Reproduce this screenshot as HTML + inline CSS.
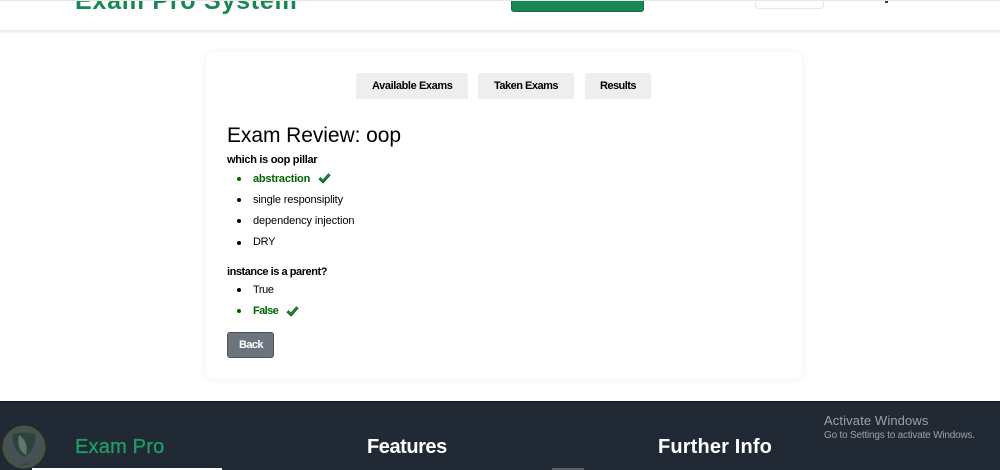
<!DOCTYPE html>
<html><head><meta charset="utf-8"><style>
html,body{margin:0;padding:0;width:1000px;height:470px;overflow:hidden;background:#fff;font-family:"Liberation Sans",sans-serif;color:#000}
div,span{position:absolute;white-space:nowrap;box-sizing:border-box}
.t{line-height:1}
.tab{background:#eee;top:73px;height:26px;border-radius:3px 3px 0 0}
.b{font-weight:700;font-size:11px}
.r{font-size:11px}
.dot{width:4px;height:4px;border-radius:50%;background:#000;left:236.5px;margin-top:.5px}
.g{color:#006400}
.dg{background:#006400}
</style></head><body>
<div style="left:-10px;top:-10px;width:1020px;height:40px;background:#fff;border-radius:10px;box-shadow:0 1px 4px rgba(0,0,0,.14)"></div>
<div style="left:0;top:0;width:1000px;height:1px;background:#e6e6e6"></div>
<div style="left:0;top:1px;width:1000px;height:29px;overflow:hidden">
<span class="t" style="left:75px;top:-12px;font-size:25px;font-weight:700;color:#198754;letter-spacing:.75px">Exam Pro System</span>
<div style="left:511px;top:-10px;width:133px;height:21px;background:#198754;border:1px solid #146c43;border-radius:3px"></div>
<div style="left:755px;top:-10px;width:69px;height:18px;background:#fff;border:1px solid #e4e6e9;border-radius:4px"></div>
<div style="left:885px;top:0;width:3px;height:2px;background:#14503a"></div>
</div>

<div style="left:206px;top:52px;width:596px;height:327px;background:#fff;border-radius:8px;box-shadow:0 0 8px rgba(0,0,0,.07)"></div>
<div class="tab" style="left:356px;width:112px"></div>
<div class="tab" style="left:478px;width:96px"></div>
<div class="tab" style="left:585px;width:66px"></div>
<span class="t b" style="left:372px;top:81px;letter-spacing:-.4px">Available Exams</span>
<span class="t b" style="left:494px;top:81px;letter-spacing:-.5px">Taken Exams</span>
<span class="t b" style="left:600px;top:81px;letter-spacing:-.55px">Results</span>

<span class="t" style="left:227px;top:125px;font-size:21px;letter-spacing:-.07px">Exam Review: oop</span>
<span class="t b" style="left:227px;top:155px;letter-spacing:-.3px">which is oop pillar</span>
<div class="dot dg" style="top:176px"></div>
<span class="t b g" style="left:253px;top:174px;letter-spacing:-.2px">abstraction</span>
<svg style="position:absolute;left:318px;top:172px" width="13" height="12" viewBox="0 0 13 12"><path d="M1.5 6.2L5 9.5L11.5 2.2" fill="none" stroke="#0b5c1a" stroke-width="3"/><path d="M2 6.5L5 9L11 2.6" fill="none" stroke="#2f9e3f" stroke-width="1"/></svg>
<div class="dot" style="top:197px"></div>
<span class="t r" style="left:253px;top:195px;letter-spacing:-.15px">single responsiplity</span>
<div class="dot" style="top:218px"></div>
<span class="t r" style="left:253px;top:216px;letter-spacing:-.1px">dependency injection</span>
<div class="dot" style="top:240px"></div>
<span class="t r" style="left:253px;top:237px;letter-spacing:-.3px">DRY</span>

<span class="t b" style="left:227px;top:267px;letter-spacing:-.45px">instance is a parent?</span>
<div class="dot" style="top:287px"></div>
<span class="t r" style="left:253px;top:285px;letter-spacing:-.4px">True</span>
<div class="dot dg" style="top:308px"></div>
<span class="t b g" style="left:253px;top:306px;letter-spacing:-.6px">False</span>
<svg style="position:absolute;left:286px;top:305px" width="13" height="12" viewBox="0 0 13 12"><path d="M1.5 6.2L5 9.5L11.5 2.2" fill="none" stroke="#0b5c1a" stroke-width="3"/><path d="M2 6.5L5 9L11 2.6" fill="none" stroke="#2f9e3f" stroke-width="1"/></svg>

<div style="left:227px;top:332px;width:47px;height:26px;background:#6c757d;border:1px solid #4d5154;border-radius:3px"></div>
<span class="t" style="left:239px;top:340px;font-size:11px;color:#fff;letter-spacing:-.6px;font-weight:700">Back</span>

<div style="left:0;top:401px;width:1000px;height:69px;background:#212935;border-top:1px solid #16191e"></div>
<span class="t" style="left:75px;top:437px;font-size:20px;color:#1f9d63;letter-spacing:.2px;-webkit-text-stroke:.35px #1f9d63">Exam Pro</span>
<span class="t" style="left:367px;top:437px;font-size:20px;font-weight:700;color:#fff;letter-spacing:-.45px">Features</span>
<span class="t" style="left:658px;top:437px;font-size:20px;font-weight:700;color:#fff;letter-spacing:.15px">Further Info</span>
<span class="t" style="left:824px;top:414px;font-size:13px;color:#9ca1a8;letter-spacing:.12px">Activate Windows</span>
<span class="t" style="left:824px;top:431px;font-size:10px;color:#9ca1a8;letter-spacing:-.2px">Go to Settings to activate Windows.</span>

<svg style="position:absolute;left:2px;top:424px;opacity:.8" width="46" height="46" viewBox="0 0 46 46"><circle cx="22" cy="23" r="20" fill="#4f5c5c" stroke="#4c5f42" stroke-width="3"/><path d="M11 10Q22 7 33 10Q35 25 22 33Q9 25 11 10Z" fill="#2f4d3c"/><path d="M17 11Q27 18 24 31Q14 25 17 11Z" fill="#77868a"/><text x="22" y="41" font-size="6" text-anchor="middle" fill="#39424a" font-family="DejaVu Sans, sans-serif">كفيل</text></svg>
<div style="left:32px;top:468px;width:190px;height:2px;background:#fff"></div>
<div style="left:552px;top:468px;width:32px;height:2px;background:#5b6068"></div>
</body></html>
